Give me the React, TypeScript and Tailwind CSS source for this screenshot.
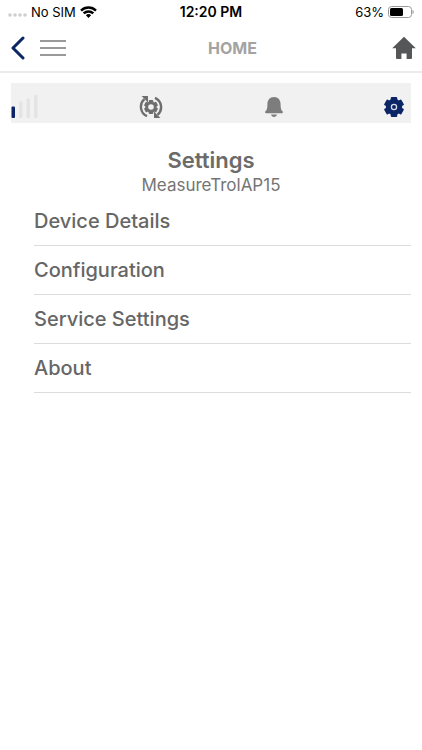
import type { ReactNode } from 'react';

const MENU_ITEMS = ['Device Details', 'Configuration', 'Service Settings', 'About'];

function StatusBar() {
  return (
    <div className="grid h-6 grid-cols-3 items-center px-2 text-[13px] leading-4 text-black">
      <div className="flex items-center gap-1">
        <svg className="h-3 w-[19px] shrink-0" viewBox="0 0 19 12" fill="#cfcfcf">
          <circle cx="2" cy="9" r="1.8" />
          <circle cx="7" cy="9" r="1.8" />
          <circle cx="12" cy="9" r="1.8" />
          <circle cx="17" cy="9" r="1.8" />
        </svg>
        <span className="whitespace-nowrap">No SIM</span>
        <svg className="h-3 w-[17px] shrink-0" viewBox="0 0 17 12" fill="none" stroke="#000" strokeWidth="2.5">
          <path d="M1 4.6a10.8 10.8 0 0 1 15 0" />
          <path d="M3.7 7.4a6.9 6.9 0 0 1 9.6 0" />
          <path d="M8.5 12 5.9 9.3a3.8 3.8 0 0 1 5.2 0Z" fill="#000" stroke="none" />
        </svg>
      </div>
      <span className="text-center text-sm leading-4 font-semibold">12:20 PM</span>
      <div className="flex items-center justify-end gap-1">
        <span>63%</span>
        <svg className="h-3 w-[26px]" viewBox="0 0 26 12">
          <rect x="0.5" y="0.5" width="23" height="11" rx="3" fill="none" stroke="#999" />
          <rect x="2" y="2" width="13" height="8" rx="1.5" />
          <path d="M24.5 4v4c1.6-.5 1.6-3.5 0-4Z" fill="#999" />
        </svg>
      </div>
    </div>
  );
}

function Header() {
  return (
    <header className="grid h-[49px] grid-cols-[auto_1fr_auto] items-center border-b-2 border-[#ebebeb] pl-[11px] pr-1.5">
      <div className="flex w-16 items-center gap-[15px]">
        <button type="button" aria-label="Back">
          <svg className="h-6 w-3.5" viewBox="0 0 14 24" fill="none" stroke="#0b2566" strokeWidth="3" strokeLinecap="round" strokeLinejoin="round">
            <path d="M12 2 2 12l10 10" />
          </svg>
        </button>
        <button type="button" aria-label="Menu">
          <svg className="h-4 w-[26px]" viewBox="0 0 26 16" fill="#999">
            <path d="M0 0h26v2H0zM0 7h26v2H0zM0 14h26v2H0z" />
          </svg>
        </button>
      </div>
      <h1 className="pl-1.5 text-center text-base font-bold text-[#a3a3a3]">HOME</h1>
      <a href="#home" aria-label="Home" className="ml-2">
        <svg className="h-6 w-6" viewBox="0 0 24 24" fill="#555658">
          <path d="M12 0.8 23.8 12.2H20V22a1 1 0 0 1-1 1h-4.4v-5.6h-5.2V23H5a1 1 0 0 1-1-1v-9.8H.2Z" />
        </svg>
      </a>
    </header>
  );
}

function ToolButton({ label, children }: { label: string; children: ReactNode }) {
  return (
    <button type="button" aria-label={label} className="flex h-full items-center">
      {children}
    </button>
  );
}

// spokes around (12, 12), shared by both gear icons
function GearTeeth({ angles, width, reach }: { angles: number[]; width: number; reach: number }) {
  return (
    <>
      {angles.map((a) => (
        <rect
          key={a}
          x={12 - width / 2}
          y={12 - reach}
          width={width}
          height={reach * 2}
          rx="1"
          transform={`rotate(${a} 12 12)`}
        />
      ))}
    </>
  );
}

function Toolbar() {
  return (
    <nav className="flex h-10 items-center justify-between bg-[#f1f1f1] pt-2 pr-[7px]">
      <ToolButton label="Signal">
        <svg className="h-6 w-[27px]" viewBox="0 0 27 24" fill="#e4e4e4">
          <rect x="0.5" y="11.5" width="3.5" height="11.5" rx="1" fill="#0b2566" />
          <rect x="8" y="6.5" width="3.5" height="16.5" rx="1" />
          <rect x="15.5" y="3.5" width="3.5" height="19.5" rx="1" />
          <rect x="23" y="0" width="3.5" height="23" rx="1" />
        </svg>
      </ToolButton>
      <ToolButton label="Sync">
        <svg className="h-6 w-6" viewBox="0 0 24 24" fill="#6e6e6e">
          <g fill="none" stroke="#6e6e6e" strokeWidth="2.4">
            <path d="M8 21.2A10.2 10.2 0 0 1 5.4 4.2" />
            <path d="M16 2.8A10.2 10.2 0 0 1 18.6 19.8" />
          </g>
          <path d="M2.6 1h6.4v6.4ZM21.4 23H15v-6.4Z" />
          <GearTeeth angles={[0, 60, 120]} width={4.6} reach={7} />
          <circle cx="12" cy="12" r="5.6" />
          <circle cx="12" cy="12" r="2.8" fill="#f1f1f1" />
        </svg>
      </ToolButton>
      <ToolButton label="Alerts">
        <svg className="h-5 w-[18px]" viewBox="0 0 18 20" fill="#7d7d7d">
          <path d="M9 0C4.8 0 2.4 3.2 2.4 7.2c0 4.6-.8 6-2.1 7.4-.6.7-.2 1.6.6 1.6h16.2c.8 0 1.2-.9.6-1.6-1.3-1.4-2.1-2.8-2.1-7.4C15.6 3.2 13.2 0 9 0Z" />
          <path d="M6 17.6h6c-.4 1.5-1.5 2.4-3 2.4s-2.6-.9-3-2.4Z" />
        </svg>
      </ToolButton>
      <ToolButton label="Settings">
        <svg className="h-5 w-5" viewBox="2 2 20 20" fill="#0b2566">
          <GearTeeth angles={[0, 60, 120]} width={6.5} reach={9.9} />
          <circle cx="12" cy="12" r="8.2" />
          <circle cx="12" cy="12" r="2.6" fill="none" stroke="#d5d9e4" strokeWidth="1.3" />
        </svg>
      </ToolButton>
    </nav>
  );
}

export default function App() {
  return (
    <div className="min-h-screen bg-white font-['Inter',sans-serif]">
      <StatusBar />
      <Header />
      <main className="px-[11px] pt-2.5">
        <Toolbar />
        <div className="pt-6 text-center text-[#6b6b6b]">
          <h2 className="text-[22px] leading-[26px] font-semibold">Settings</h2>
          <p className="text-[17px] leading-6 text-[#757575]">MeasureTrolAP15</p>
        </div>
        <ul className="pl-[23px]">
          {MENU_ITEMS.map((item) => (
            <li key={item} className="border-b border-[#dcdcdc]">
              <a href="#" className="flex h-12 items-center text-xl font-medium text-[#666]">
                {item}
              </a>
            </li>
          ))}
        </ul>
      </main>
    </div>
  );
}
